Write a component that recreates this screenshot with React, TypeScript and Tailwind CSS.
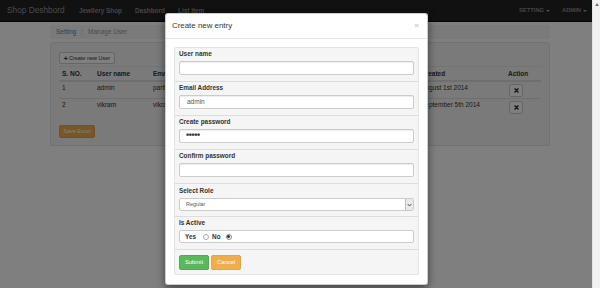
import React from 'react';

const font = { fontFamily: '"Liberation Sans", Arial, sans-serif' };

// Remove glyph used in the action column
const RemoveIcon = () => (
  <svg width="5" height="5" viewBox="0 0 10 10">
    <path d="M2 2 L8 8 M8 2 L2 8" stroke="#222" strokeWidth="2.6" strokeLinecap="square" />
  </svg>
);

const Caret = () => (
  <span className="ml-[2px] inline-block w-0 h-0 border-l-[2px] border-r-[2px] border-t-[2px] border-l-transparent border-r-transparent border-t-[#9d9d9d] align-middle" />
);

const users = [
  { id: 1, name: 'admin', email: 'parth@shop.com', created: 'August 1st 2014' },
  { id: 2, name: 'vikram', email: 'vikram@shop.com', created: 'September 5th 2014' },
];

const Navbar = () => (
  <div className="h-[22px] bg-[#222] border-b border-[#080808] flex items-center text-[#959595]">
    <span className="w-[79px] pl-[7px] text-[8.3px] whitespace-nowrap">Shop Deshbord</span>
    <span className="w-[56px] text-[6.4px] font-bold text-[#8a8a8a] whitespace-nowrap">Jewllery Shop</span>
    <span className="w-[43px] text-[6.4px] font-bold text-[#8a8a8a] whitespace-nowrap">Dashbord</span>
    <span className="text-[6.4px] font-bold text-[#8a8a8a] whitespace-nowrap">List item</span>
    <div className="ml-auto flex items-center text-[5.8px] font-bold text-[#8a8a8a]">
      <span className="w-[43px] whitespace-nowrap">SETTING<Caret /></span>
      <span className="w-[30px] whitespace-nowrap">ADMIN<Caret /></span>
    </div>
  </div>
);

const Page = () => (
  <div className="ml-[50px] w-[500px] text-[#333]">
    <div className="mt-[3px] h-[14px] bg-[#f5f5f5] rounded-[2px] flex items-center pl-[6px] text-[6.5px]">
      <span className="text-[#428bca]">Setting</span>
      <span className="text-[#ccc] mx-[5px]">/</span>
      <span className="text-[#999]">Manage User</span>
    </div>
    <div className="mt-[3px] h-[104px] bg-[#f5f5f5] border border-[#e3e3e3] rounded-[2px] pt-[9px] px-[8px]">
      <div className="h-[15px] pb-[3px] border-b border-[#e6e6e6]">
        <button className="h-[12px] w-[56px] bg-white border border-[#ccc] rounded-[2px] flex items-center justify-center text-[5.5px] text-[#333]">
          <span className="font-bold text-[7px] leading-none mr-[1px]">+</span>Create new User
        </button>
      </div>
      <div className="w-[482px]">
        <div className="flex h-[15px] items-end pb-[2px] font-bold text-[6.5px] leading-[8px] border-b-2 border-[#ddd]">
          <span className="w-[35px] pl-[3px]">S. NO.</span>
          <span className="w-[56px] pl-[3px]">User name</span>
          <span className="w-[268px] pl-[3px]">Email</span>
          <span className="w-[87px] pl-[3px]">Created</span>
          <span className="pl-[3px]">Action</span>
        </div>
        {users.map((u, i) => (
          <div key={u.id} className={`flex h-[17px] text-[6.5px] leading-[8px] ${i === 0 ? 'border-b border-[#ddd]' : ''}`}>
            <span className="w-[35px] pl-[3px] pt-[2px]">{u.id}</span>
            <span className="w-[56px] pl-[3px] pt-[2px]">{u.name}</span>
            <span className="w-[268px] pl-[3px] pt-[2px] whitespace-nowrap">{u.email}</span>
            <span className="w-[87px] pl-[3px] pt-[2px] whitespace-nowrap">{u.created}</span>
            <div className="pl-[4px] pt-[2px]">
              <span className="w-[14px] h-[13px] bg-white border border-[#ccc] rounded-[2px] flex items-center justify-center">
                <RemoveIcon />
              </span>
            </div>
          </div>
        ))}
      </div>
      <button className="mt-[9px] h-[13px] w-[36px] bg-[#f0ad4e] border border-[#eea236] rounded-[2px] text-white text-[5.5px]">
        Save Excel
      </button>
    </div>
  </div>
);

const Field = ({ label, children }: { label: string; children: React.ReactNode }) => (
  <div className="px-[4px] pt-[2px] pb-[6px] border-b border-[#ddd]">
    <div className="text-[6.4px] font-bold leading-[8px] text-[#333]">{label}</div>
    <div className="mt-[3px]">{children}</div>
  </div>
);

const inputCls =
  'h-[14px] bg-white border border-[#ccc] rounded-[2px] shadow-[inset_0_1px_1px_rgba(0,0,0,0.075)] flex items-center pl-[7px] text-[6.5px] text-[#555]';

const Modal = () => (
  <div className="absolute left-[165px] top-[13px] w-[263px] h-[272px] bg-white rounded-[3px] border border-black/20 shadow-[0_3px_9px_rgba(0,0,0,0.5)]">
    <div className="h-[25px] border-b border-[#e5e5e5] flex items-center pl-[6px] pr-[8px]">
      <span className="text-[7.9px] text-[#333]">Create new entry</span>
      <span className="ml-auto text-[8px] font-bold text-[#000] opacity-20 leading-none">×</span>
    </div>
    <div className="pt-[8px] px-[8px]">
      <div className="bg-[#f5f5f5] border border-[#e3e3e3] rounded-[2px]">
        <Field label="User name">
          <div className={inputCls} />
        </Field>
        <Field label="Email Address">
          <div className={inputCls}>admin</div>
        </Field>
        <Field label="Create password">
          <div className={`${inputCls} !pl-[6px]`}>
            <span className="text-[9px] font-bold text-[#333] tracking-[-0.4px]">•••••</span>
          </div>
        </Field>
        <Field label="Confirm password">
          <div className={inputCls} />
        </Field>
        <div className="px-[4px] pt-[3px] pb-[5px] border-b border-[#ddd]">
          <div className="text-[6.4px] font-bold leading-[8px] text-[#333]">Select Role</div>
          <div className="mt-[3px] h-[13px] bg-white border border-[#ccc] rounded-[2px] flex items-center text-[5.5px] text-[#555]">
            <span className="pl-[6px]">Regular</span>
            <span className="ml-auto h-full w-[8px] bg-[#e9e9e9] border-l border-[#bbb] flex items-center justify-center">
              <svg width="5" height="4" viewBox="0 0 5 4">
                <path d="M0.7 1 L2.5 3 L4.3 1" stroke="#444" strokeWidth="0.9" fill="none" />
              </svg>
            </span>
          </div>
        </div>
        <div className="px-[4px] pt-[2px] pb-[6px] border-b border-[#ddd]">
          <div className="text-[6.4px] font-bold leading-[8px] text-[#333]">Is Active</div>
          <div className="mt-[3px] h-[13px] bg-white border border-[#ccc] rounded-[2px] flex items-center pl-[5px] text-[6.4px] font-bold text-[#333]">
            <span>Yes</span>
            <span className="ml-[7px] w-[6px] h-[6px] rounded-full border border-[#aaa] bg-white" />
            <span className="ml-[3px]">No</span>
            <span className="ml-[5px] w-[6px] h-[6px] rounded-full border border-[#888] bg-white flex items-center justify-center">
              <span className="w-[3px] h-[3px] rounded-full bg-[#333]" />
            </span>
          </div>
        </div>
        <div className="px-[4px] pt-[5px] pb-[4px] flex gap-[2px]">
          <button className="h-[15px] w-[30px] bg-[#5cb85c] border border-[#4cae4c] rounded-[2px] text-white text-[5.8px]">Submit</button>
          <button className="h-[15px] w-[30px] bg-[#f0ad4e] border border-[#eea236] rounded-[2px] text-white text-[5.8px]">Cancel</button>
        </div>
      </div>
    </div>
  </div>
);

export default function App() {
  return (
    <div className="w-[600px] h-[288px] flex overflow-hidden bg-white" style={font}>
      <div className="relative w-[592px] h-full">
        <Navbar />
        <Page />
        {/* modal backdrop */}
        <div className="absolute inset-0 bg-black/50" />
        <Modal />
      </div>
      <div className="w-[8px] h-full bg-[#f1f1f1] border-l border-[#e3e3e3] flex justify-center pt-[3px]">
        <span className="w-0 h-0 border-l-[2px] border-r-[2px] border-b-[3px] border-l-transparent border-r-transparent border-b-[#777]" />
      </div>
    </div>
  );
}
